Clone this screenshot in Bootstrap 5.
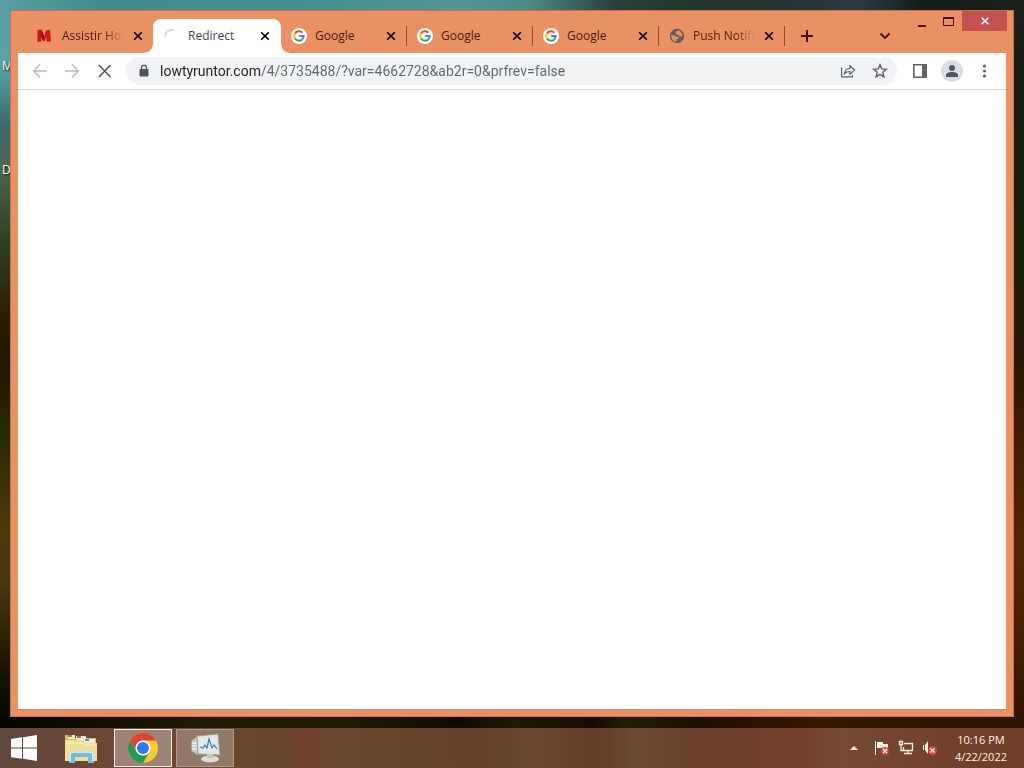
<!DOCTYPE html>
<html lang="en">
<head>
<meta charset="utf-8">
<meta name="viewport" content="width=device-width, initial-scale=1">
<title>Redirect</title>
<link href="https://cdn.jsdelivr.net/npm/bootstrap@5.3.0/dist/css/bootstrap.min.css" rel="stylesheet">
<style>
  :root { --frame: #e99064; --ink: #4b1d0c; }
  body { font: 12px/16px "Open Sans", "Noto Sans", sans-serif; background: #100b03; }
  button { border: 0; background: none; padding: 0; }
  svg { display: block; }
  .desktop {
    padding: 10px 10px 11px;
    background:
      linear-gradient(90deg, #58a0a6 0, #43898b 10%, #438f90 30%, #559492 45%, #4a8884 52%, #2c3f3c 60%, #24382b 66%, #26322f 75%, #2c3941 84%, #161d19 90%, #1c221e) top / 100% 10px no-repeat,
      linear-gradient(90deg, #050500, #221d04 22%, #1c1a04 35%, #100b03 45%, #1c1a04 50%, #180b02 58%, #202008 61%, #1e0e02 68%, #361902 80%, #2b1503) bottom / 100% 11px no-repeat,
      linear-gradient(#58a0a6 0, #56a3a8 9%, #3c6b6c 17%, #4d674d 23%, #304025 33%, #2b2005 43%, #211803 50%, #292a03 60%, #4a3a0b 72%, #48380d 80%, #1a1503 92%, #050500) left / 10px 100% no-repeat,
      linear-gradient(#1c221e, #161d10 12%, #1c1e05 35%, #251804 48%, #421b03 60%, #512803 75%, #4a2003 85%, #301202) right / 10px 100% no-repeat;
  }
  .shortcut { left: 2px; color: #fff; text-shadow: 1px 1px 2px #000; }
  .shortcut-m { top: 58px; }
  .shortcut-d { top: 162px; }
  .window { background: var(--frame); border: 1px solid #c9714b; padding: 0 7px 6px; }
  .tabstrip { padding: 8px 115px 0 9px; height: 42px; color: var(--ink); }
  .tab { flex: 0 1 126px; min-width: 0; height: 34px; padding: 0 10px 0 9px; position: relative; }
  .tab .fav { width: 16px; flex: none; }
  .tab .title { margin-left: 10px; min-width: 0; overflow: hidden; white-space: nowrap; color: inherit; text-decoration: none; flex: 1 1 0; }
  .tab .faded { -webkit-mask-image: linear-gradient(90deg, #000 70%, transparent); mask-image: linear-gradient(90deg, #000 70%, transparent); }
  .tab .shut { margin-left: 10px; }
  .tab.ruled { border-right: 1px solid transparent; padding: 0 10px 0 6px; background: linear-gradient(#8f4d2e, #8f4d2e) right / 1px 20px no-repeat border-box; }
  .tab.ruled .title { margin-left: 8px; }
  .tab.current { flex-basis: 128px; background: #fff; border-radius: 8px 8px 0 0; color: #45474a; padding-right: 11px; }
  .tab.current::before, .tab.current::after { content: ""; position: absolute; bottom: 0; width: 8px; height: 8px; }
  .tab.current::before { right: 100%; background: radial-gradient(circle at 0 0, transparent 7px, #fff 8px); }
  .tab.current::after { left: 100%; background: radial-gradient(circle at 100% 0, transparent 7px, #fff 8px); }
  .caption-buttons { position: absolute; top: 0; right: 6px; height: 20px; }
  .caption-buttons .win { width: 27px; height: 20px; }
  .caption-buttons .win-close { width: 45px; background: #c75050; margin-left: 0; }
  .tools { height: 37px; background: #fff; border-bottom: 1px solid #d5d7da; padding: 0 16px 0 12px; color: #5f6368; }
  .tools .arrow { margin-right: 14px; }
  .omnibox { height: 28px; background: #f1f3f4; border-radius: 14px; padding: 0 9px 0 12px; margin-left: 14px; }
  .omnibox input { border: 0; outline: 0; padding: 0; height: 20px; margin-left: 10px; font-family: Roboto, sans-serif; font-size: 14px; line-height: 20px; color: transparent;
    background: linear-gradient(90deg, #202124 101px, #63676b 101px); -webkit-background-clip: text; background-clip: text; }
  .avatar { width: 22px; height: 22px; border-radius: 50%; background: #dadfe6; margin-left: 14px; }
  .page { background: #fff; border-bottom: 1px solid #d08c6e; }
  .taskbar {
    height: 40px; color: #fff; padding: 0 17px 0 0;
    background: linear-gradient(90deg, #60483c, #704634 12%, #69472e 22%, #69442d 28%, #703f2e 30%, #6a472d 32%, #653f29 47%, #6a472f 52%, #653b29 58%, #6c4a32 62%, #693e2a 68%, #71402c 78%, #764a34 82%, #71412d 92%, #6d3e28);
  }
  .task { width: 58px; height: 38px; border: 1px solid transparent; margin-right: 4px; }
  .task.start { width: 48px; margin-right: 4px; }
  .task.open { background: rgba(255,255,255,.27); border-color: #b49c91; }
  .task.front { background: rgba(255,255,255,.33); border-color: #fff0e4; }
  .clock { font-size: 11px; line-height: 17px; margin-left: 17px; color: #fff3ea; }
</style>
</head>
<body class="vh-100 d-flex flex-column overflow-hidden">

<svg width="0" height="0" class="position-absolute" aria-hidden="true">
  <symbol id="x" viewBox="0 0 10 10"><path d="M1.2 1.2 8.8 8.8M8.8 1.2 1.2 8.8" stroke="currentColor" stroke-width="1.6"/></symbol>
  <symbol id="g" viewBox="0 0 16 16">
    <circle cx="8" cy="8" r="8" fill="#fff"/>
    <g fill="none" stroke-width="2"><path d="M4 5.6A4.7 4.7 0 0 1 11.4 4.7" stroke="#ea4335"/><path d="M4 10.4a4.7 4.7 0 0 1 0-4.8" stroke="#fbbc05"/><path d="M11.2 11.4A4.7 4.7 0 0 1 4 10.4" stroke="#34a853"/><path d="M8.2 8h4.5a4.7 4.7 0 0 1-1.5 3.4" stroke="#4285f4"/></g>
  </symbol>
</svg>

<main class="desktop flex-grow-1 d-flex position-relative">
  <span class="shortcut shortcut-m position-absolute">M</span>
  <span class="shortcut shortcut-d position-absolute">D</span>

  <section class="window flex-grow-1 d-flex flex-column position-relative">
    <div class="caption-buttons d-flex">
      <button class="win d-flex align-items-center justify-content-center" aria-label="Minimize"><svg width="11" height="12"><path d="M2 11h8" stroke="#3e1408" stroke-width="2"/></svg></button>
      <button class="win d-flex align-items-center justify-content-center" aria-label="Maximize"><svg width="11" height="9"><path d="M.5 1v7.5h10V1" fill="none" stroke="#3e1408"/><path d="M0 1h11" stroke="#3e1408" stroke-width="2"/></svg></button>
      <button class="win-close d-flex align-items-center justify-content-center" aria-label="Close window"><svg width="8" height="8"><path d="M.7.7 7.3 7.3M7.3.7.7 7.3" stroke="#fff" stroke-width="1.6"/></svg></button>
    </div>

    <nav class="tabstrip d-flex align-items-center" aria-label="Tabs">
      <div class="tab d-flex align-items-center">
        <svg class="fav" height="16" viewBox="0 0 16 16"><path d="M1.5 2 5.5 1.6 8.2 8.5 10 2.2 14 2l1 11.5-4.3.2-.5-5.2-1.5 4.5H7L5.2 8.5v5L1.4 14z" fill="#d3151b"/><path d="M5.5 1.6 8.2 8.5 7 13 5.2 8.5z" fill="#8d0b12"/></svg>
        <a class="title faded" href="#">Assistir Homem</a>
        <button class="shut" aria-label="Close tab"><svg width="10" height="10"><use href="#x"/></svg></button>
      </div>
      <div class="tab current d-flex align-items-center">
        <svg class="fav" height="16" viewBox="0 0 16 16"><path d="M3.5 9A6 6 0 0 1 12 2.5" fill="none" stroke="#d3d5d7" stroke-width="1.6"/></svg>
        <a class="title" href="#">Redirect</a>
        <button class="shut" aria-label="Close tab"><svg width="10" height="10"><use href="#x"/></svg></button>
      </div>
      <div class="tab ruled d-flex align-items-center">
        <svg class="fav ms-1" height="16"><use href="#g"/></svg>
        <a class="title" href="#">Google</a>
        <button class="shut" aria-label="Close tab"><svg width="10" height="10"><use href="#x"/></svg></button>
      </div>
      <div class="tab ruled d-flex align-items-center">
        <svg class="fav ms-1" height="16"><use href="#g"/></svg>
        <a class="title" href="#">Google</a>
        <button class="shut" aria-label="Close tab"><svg width="10" height="10"><use href="#x"/></svg></button>
      </div>
      <div class="tab ruled d-flex align-items-center">
        <svg class="fav ms-1" height="16"><use href="#g"/></svg>
        <a class="title" href="#">Google</a>
        <button class="shut" aria-label="Close tab"><svg width="10" height="10"><use href="#x"/></svg></button>
      </div>
      <div class="tab ruled d-flex align-items-center">
        <svg class="fav ms-1" height="16" viewBox="0 0 16 16"><circle cx="8" cy="8" r="7.2" fill="#665c59"/><path d="M2.2 7.2h2.6c1.500 0 1.500 1.600 3 1.600h1.400c.8 0 .8 2.200-.5 2.200H7.500v2.800C4.500 13.500 2 11 2.200 7.200zM9.500 2.500c-1 .2-2.800.6-2.800 1.800s.8 1.200.8 2 2 .2 2.500 1.200 1.500 1 3.500.8C13.600 5.500 12 3.300 9.500 2.500z" fill="#e99064"/></svg>
        <a class="title faded" href="#">Push Notification</a>
        <button class="shut" aria-label="Close tab"><svg width="10" height="10"><use href="#x"/></svg></button>
      </div>
      <button class="ms-3" aria-label="New tab"><svg width="12" height="12"><path d="M6 0v12M0 6h12" stroke="#3e1408" stroke-width="2"/></svg></button>
      <button class="ms-auto" aria-label="Search tabs"><svg width="12" height="8"><path d="M1.5 1.5 6 6l4.5-4.5" fill="none" stroke="#3e1408" stroke-width="1.8"/></svg></button>
    </nav>

    <div class="tools d-flex align-items-center">
      <button class="arrow" aria-label="Back"><svg width="20" height="16" fill="none" stroke="#b9bbbe" stroke-width="1.5"><path d="M17 8H4M10 1.5 3.5 8l6.5 6.5"/></svg></button>
      <button class="arrow" aria-label="Forward" disabled><svg width="16" height="16" fill="none" stroke="#b9bbbe" stroke-width="1.5"><path d="M1 8h13M8 1.5 14.5 8 8 14.5"/></svg></button>
      <button class="ms-1" aria-label="Stop"><svg width="14" height="14" fill="none" stroke="#4d5156" stroke-width="1.5"><path d="M1 1l11.500 12M12.500 1 1 13"/></svg></button>
      <div class="omnibox flex-grow-1 d-flex align-items-center">
        <svg width="12" height="14" viewBox="0 0 12 14"><rect x="1.5" y="5" width="9" height="7.5" rx="1" fill="#505459"/><path d="M3.5 5.5V3.8a2.5 2.5 0 0 1 5 0v1.7" fill="none" stroke="#505459" stroke-width="1.3"/></svg>
        <input class="flex-grow-1" type="text" aria-label="Address" spellcheck="false" value="lowtyruntor.com/4/3735488/?var=4662728&amp;ab2r=0&amp;prfrev=false">
        <button class="me-3" aria-label="Share"><svg width="16" height="16" fill="none" stroke="#5f6368" stroke-width="1.2"><path d="M1.600 4.500v9.300h10.800V12M4.500 10.500C5 7 7 5.500 10 5.500V2.700l4.500 4.300-4.500 4.200V8.500c-2.500 0-4.200.5-5.500 2z"/></svg></button>
        <button aria-label="Bookmark this tab"><svg width="16" height="16" fill="none" stroke="#5f6368" stroke-width="1.4"><path d="m8 1.800 1.800 4.100 4.500.4-3.400 3 1 4.400L8 11.400l-3.900 2.300 1-4.400-3.400-3 4.500-.4z"/></svg></button>
      </div>
      <button class="ms-3" aria-label="Side panel"><svg width="14" height="14"><path d="M.8.8h12.400v12.400H.8z" fill="none" stroke="#5f6368" stroke-width="1.6"/><path d="M9 1h4v12H9z" fill="#5f6368"/></svg></button>
      <button class="avatar d-flex align-items-center justify-content-center" aria-label="Profile"><svg width="12" height="12" fill="#50555f"><circle cx="6" cy="3" r="3"/><path d="M0 12v-2c0-2 3-3 6-3s6 1 6 3v2z"/></svg></button>
      <button class="ms-3" aria-label="Menu"><svg width="11" height="14" fill="#5f6368"><circle cx="5.5" cy="2" r="1.6"/><circle cx="5.5" cy="7" r="1.6"/><circle cx="5.5" cy="12" r="1.6"/></svg></button>
    </div>

    <div class="page flex-grow-1"></div>
  </section>
</main>

<footer class="taskbar d-flex align-items-center">
  <button class="task start d-flex align-items-center justify-content-center" aria-label="Start"><svg width="26" height="26" fill="#fff"><path d="M0 4 11 2.300v10.200H0zM12 2.200 26 0v12.500H12zM0 13.500h11v10.200L0 22.200zM12 13.500h14V26l-14-2.200z"/></svg></button>
  <button class="task d-flex align-items-center justify-content-center" aria-label="File Explorer"><svg width="34" height="30" viewBox="0 0 34 30"><path d="M1 2h8l2 3h21v22H1z" fill="#d9b765"/><path d="M4 2h7v4H4z" fill="#ece7c9"/><path d="M4 2h4v2H4z" fill="#589b53"/><path d="M12 3h10v5H12z" fill="#f4eedb"/><path d="M13 3h4v2h-4z" fill="#d65540"/><path d="M20 6h11v4H20z" fill="#f4eedb"/><path d="M21 6h4v2h-4z" fill="#5199c9"/><path d="M1 7h16l3 3h13v18H1z" fill="#f3df93"/><path d="M2 10h16l2 2h12" fill="none" stroke="#fff4bd"/><path d="M5 30V22q0-4 4-4h17q4 0 4 4v8h-6v-6H11v6z" fill="#76bce5"/><path d="M6 28v-6q0-3 3-3h17q3 0 3 3v6" fill="none" stroke="#d7f3ff" stroke-width="1.5"/></svg></button>
  <button class="task open front d-flex align-items-center justify-content-center" aria-label="Google Chrome"><svg width="30" height="30" viewBox="0 0 30 30"><circle cx="15" cy="15" r="15" fill="#fbc82f"/><path d="M2 7.5A15 15 0 0 1 28 7.5H15A7.5 7.5 0 0 0 8.500 18.7z" fill="#db4437"/><path d="M2 7.5A15 15 0 0 0 15 30l6.5-11.2A7.5 7.5 0 0 1 8.5 18.7z" fill="#249957"/><circle cx="15" cy="15" r="7.5" fill="#fff"/><circle cx="15" cy="15" r="6" fill="#3078ed"/></svg></button>
  <button class="task open d-flex align-items-center justify-content-center" aria-label="System monitor"><svg width="32" height="30" viewBox="0 0 32 30"><path d="m2 8 7-6 3 2v17l-4 1-6-4z" fill="#c4c7c6" stroke="#858783"/><path d="M3 10h5M3 13h5M3 16h5" stroke="#fff"/><path d="m8 3 21-2 2 21-22-1z" fill="#e2e3dc" stroke="#9b9c95"/><path d="m10 5 17-1 2 15-19-1z" fill="#dcebf2"/><path d="m11 14 3 1 2-3 2 3 2-9 3 9 2-3 3 4" fill="none" stroke="#397da5" stroke-width="1.2"/><ellipse cx="21" cy="26" rx="9" ry="3.5" fill="#dcdcd5"/><path d="M18 21h6v4h-6z" fill="#c4c5bf"/></svg></button>

  <div class="ms-auto d-flex align-items-center">
    <button class="me-3" aria-label="Show hidden icons"><svg width="8" height="4"><path d="M0 4 4 0l4 4z" fill="#fff0e4"/></svg></button>
    <button class="me-2" aria-label="Action Center"><svg width="16" height="16"><path d="M1.5 1v14" stroke="#fff0e4"/><path d="M3 2h6v2h5v6H9V8H3z" fill="#fff0e4"/><circle cx="11" cy="11" r="4" fill="#d94343"/><path d="m9 9 4 4m0-4-4 4" stroke="#fff" stroke-width="1.3"/></svg></button>
    <button class="me-2" aria-label="Network"><svg width="16" height="16" fill="none" stroke="#fff0e4" stroke-width="1.3"><path d="M6 3.5h8.5v7H5.5V7M10 10.5v3M6 13.5h8M1.5 1.5h3v3h-3zM3 5v5.5h2"/></svg></button>
    <button aria-label="Volume muted"><svg width="16" height="16"><path d="M1 5h1v5H1zM3 5l3-4v13l-3-4z" fill="#fff0e4"/><circle cx="10.5" cy="10.5" r="4.5" fill="#d94343"/><path d="m8.5 8.5 4 4m0-4-4 4" stroke="#fff" stroke-width="1.3"/></svg></button>
    <time class="clock text-center" datetime="2022-04-22T22:16">10:16 PM<br>4/22/2022</time>
  </div>
</footer>

<script src="https://cdn.jsdelivr.net/npm/bootstrap@5.3.0/dist/js/bootstrap.bundle.min.js"></script>
</body>
</html>
